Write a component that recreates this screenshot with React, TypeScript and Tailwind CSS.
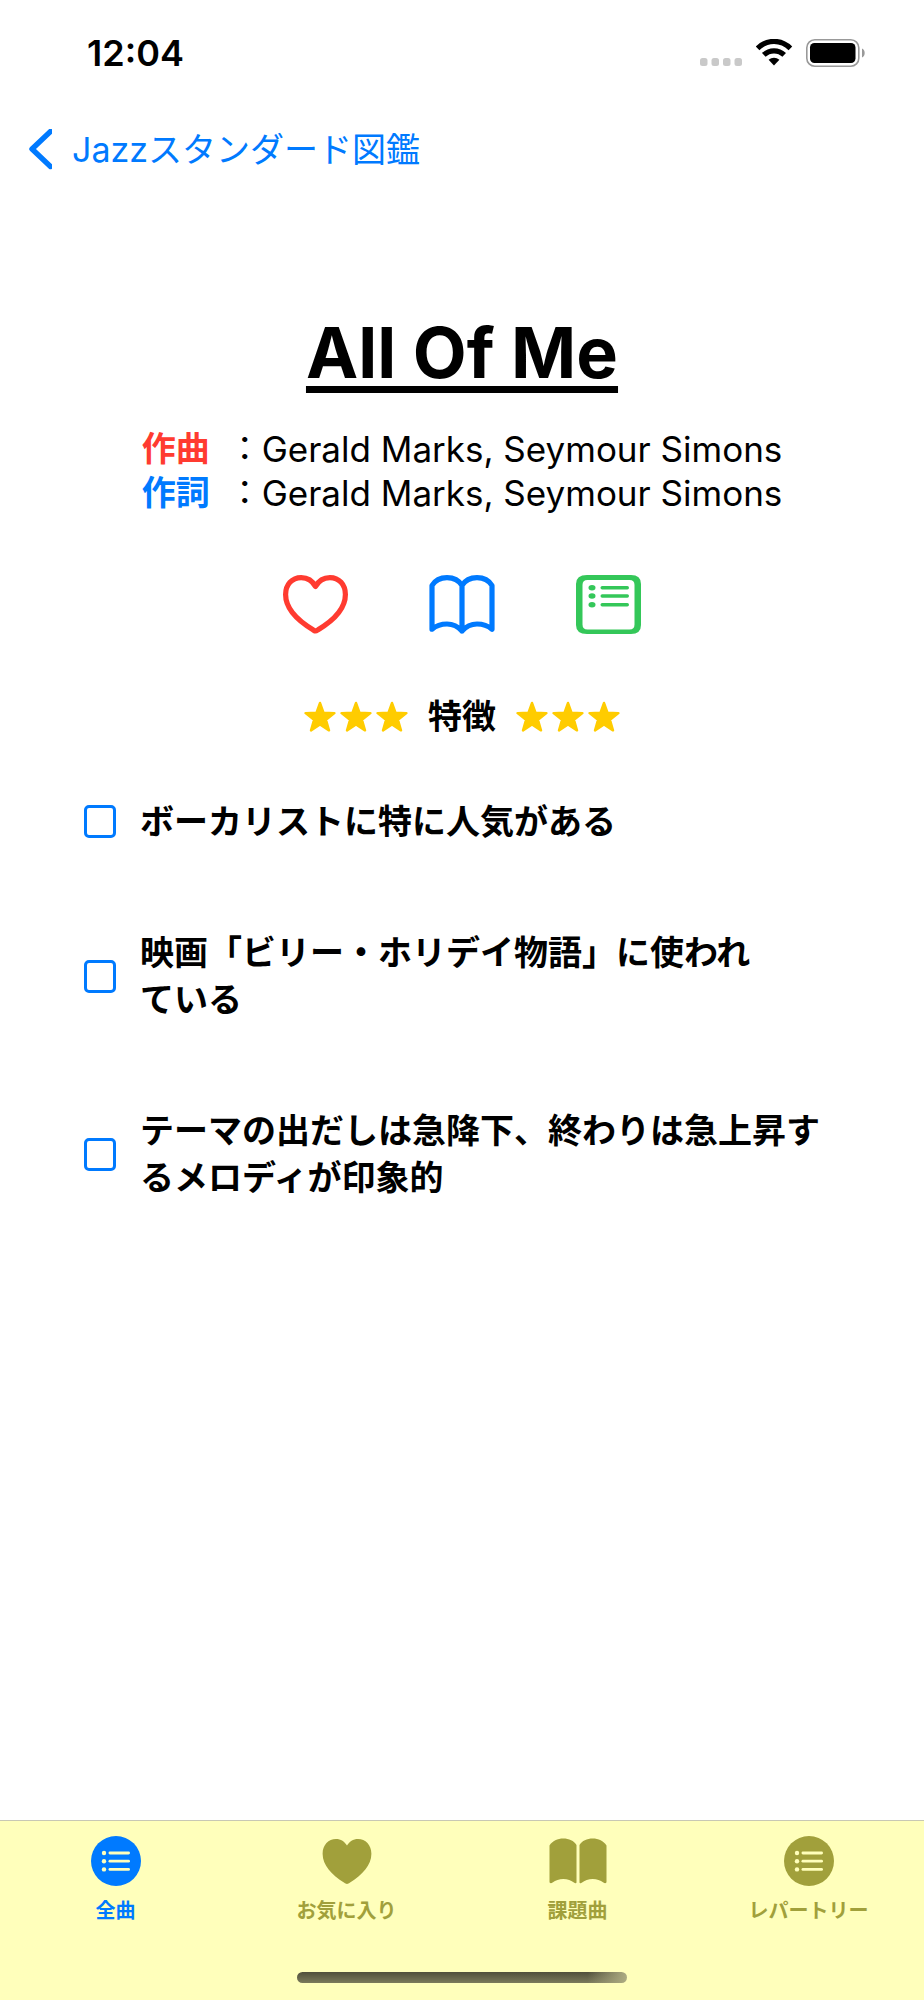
import React, { useState } from 'react';

const credits = [
    { label: '作曲', name: 'Gerald Marks, Seymour Simons', color: 'text-[#ff3b30]' },
    { label: '作詞', name: 'Gerald Marks, Seymour Simons', color: 'text-[#007aff]' },
];

const features = [
    'ボーカリストに特に人気がある',
    '映画「ビリー・ホリデイ物語」に使われ\nている',
    'テーマの出だしは急降下、終わりは急上昇す\nるメロディが印象的',
];

const tabs = [
    { label: '全曲', icon: ListCircleIcon },
    { label: 'お気に入り', icon: HeartFillIcon },
    { label: '課題曲', icon: BookFillIcon },
    { label: 'レパートリー', icon: ListCircleIcon },
];

function ListCircleIcon() {
    return (
        <svg width="50" height="50" viewBox="0 0 50 50">
            <circle cx="25" cy="25" r="25" fill="currentColor" />
            <g fill="#ffffbb">
                <circle cx="13" cy="17" r="2.2" />
                <circle cx="13" cy="25.2" r="2.2" />
                <circle cx="13" cy="33.4" r="2.2" />
                <rect x="17.5" y="15.6" width="21.5" height="2.8" rx="1.4" />
                <rect x="17.5" y="23.8" width="21.5" height="2.8" rx="1.4" />
                <rect x="17.5" y="32" width="21.5" height="2.8" rx="1.4" />
            </g>
        </svg>
    );
}

function HeartFillIcon() {
    return (
        <svg width="50" height="50" viewBox="0 0 50 50" fill="currentColor">
            <path d="M25 48C24 48 23.2 47.4 22.3 46.8C9.5 38.6 .6 29 .6 17.7C.6 9 6.5 3 14 3C18.8 3 22.8 5.6 25 9.6C27.2 5.6 31.2 3 36 3C43.5 3 49.4 9 49.4 17.7C49.4 29 40.5 38.6 27.7 46.8C26.8 47.4 26 48 25 48Z" />
        </svg>
    );
}

function BookFillIcon() {
    return (
        <svg width="58" height="50" viewBox="0 0 58 50" fill="currentColor">
            <path d="M.5 9.5C3.5 5 8.5 2.6 14.3 2.6C20 2.6 25 5 27.5 9V46.2C27.5 47.3 26.2 47.6 25.3 46.8C22.3 44.3 18.5 43 14.3 43C10 43 6.7 44.3 3.6 46.6C2.2 47.6 .5 47.5 .5 45.8Z" />
            <path d="M57.5 9.5C54.5 5 49.5 2.6 43.7 2.6C38 2.6 33 5 30.5 9V46.2C30.5 47.3 31.8 47.6 32.7 46.8C35.7 44.3 39.5 43 43.7 43C48 43 51.3 44.3 54.4 46.6C55.8 47.6 57.5 47.5 57.5 45.8Z" />
        </svg>
    );
}

function HeartIcon() {
    return (
        <svg width="66" height="60" viewBox="0 0 66 60" fill="none" stroke="#ff3b30" strokeWidth="5.2" strokeLinejoin="round">
            <path d="M32.5 11.5C29.5 5.8 24.5 2.6 18.2 2.6C9 2.6 2.6 9.6 2.6 19.6C2.6 33 14.5 45.5 30 54.8C31.6 55.8 31.8 56 32.5 56C33.2 56 33.5 55.8 35.1 54.8C50.6 45.5 62.4 33 62.4 19.6C62.4 9.6 56.1 2.6 46.9 2.6C40.6 2.6 35.6 5.8 32.5 11.5Z" />
        </svg>
    );
}

function BookIcon() {
    return (
        <svg width="66" height="60" viewBox="0 0 66 60" fill="none" stroke="#007aff" strokeWidth="5.2" strokeLinecap="round" strokeLinejoin="round">
            <path d="M33 56V10.5C30 5.5 24.5 2.6 18 2.6C11.5 2.6 6 5.5 3 10.5V54.2C7 50.8 12 49 18 49C24 49 29 51.5 33 56C37 51.5 42 49 48 49C54 49 59 50.8 63 54.2V10.5C60 5.5 54.5 2.6 48 2.6C41.5 2.6 36 5.5 33 10.5" />
        </svg>
    );
}

function ListIcon() {
    return (
        <svg width="66" height="60" viewBox="0 0 66 60" fill="#34c759">
            <path fillRule="evenodd" d="M12 0H56Q66 0 66 9V50Q66 59 56 59H12Q1 59 1 50V9Q1 0 12 0ZM12.5 5Q7.500 5 7.500 10V49.5Q7.500 54.5 12.500 54.5H54.5Q59.5 54.5 59.5 49.5V10Q59.5 5 54.5 5Z" />
            <ellipse cx="17" cy="12.7" rx="3.5" ry="2.7" />
            <ellipse cx="17" cy="21" rx="3.5" ry="2.7" />
            <ellipse cx="17" cy="29.7" rx="3.5" ry="2.7" />
            <rect x="25.5" y="11" width="28.5" height="3.5" rx="1.7" />
            <rect x="25.5" y="19.3" width="28.5" height="3.5" rx="1.7" />
            <rect x="25.5" y="28" width="28.5" height="3.5" rx="1.7" />
        </svg>
    );
}

function Stars() {
    return (
        <div className="flex gap-1">
            {[0, 1, 2].map((i) => (
                <svg key={i} width="32" height="32" viewBox="0 0 32 32" fill="#ffcc00" stroke="#ffcc00" strokeWidth="2.4" strokeLinejoin="round">
                    <path d="M16 2L19.6 11.8L30.4 12.1L22 18.9L25 29.4L16 23.6L7 29.4L10 18.9L1.6 12.1L12.4 11.8Z" />
                </svg>
            ))}
        </div>
    );
}

function StatusBar() {
    return (
        <div className="flex h-[106px] items-center justify-between pl-[87px] pr-[58px]">
            <span className="text-[36px] font-semibold leading-[44px]">12:04</span>
            <div className="flex items-center">
                <svg width="44" height="28" viewBox="0 0 44 28" fill="#c9c9c9">
                    <rect x="0" y="19" width="7.5" height="8" rx="2.5" />
                    <rect x="11.5" y="19" width="7.5" height="8" rx="2.5" />
                    <rect x="23" y="19" width="7.5" height="8" rx="2.5" />
                    <rect x="34.5" y="19" width="7.5" height="8" rx="2.5" />
                </svg>
                <svg className="ml-3" width="38" height="28" viewBox="0 0 38 28">
                    <g fill="none" stroke="#000" strokeWidth="5.2">
                        <path d="M1.6 9.3C11 .1 25 .1 34.4 9.3" />
                        <path d="M7.8 15.9C13.6 10.4 22.4 10.4 28.2 15.9" />
                    </g>
                    <path d="M12.6 20.7C15.8 18 20.2 18 23.4 20.7L18 26.5Z" />
                </svg>
                <svg className="ml-3" width="60" height="28" viewBox="0 0 60 28">
                    <rect x=".8" y=".8" width="52" height="26.4" rx="8" fill="none" stroke="#999" strokeWidth="1.6" />
                    <rect x="4" y="4" width="45.5" height="20" rx="4.5" />
                    <path d="M56 9.5C59.6 11 59.6 17 56 18.5Z" fill="#999" />
                </svg>
            </div>
        </div>
    );
}

export default function App() {
    const [checked, setChecked] = useState<boolean[]>(features.map(() => false));
    const [activeTab, setActiveTab] = useState(0);

    const toggle = (index: number) => {
        setChecked(checked.map((value, i) => (i === index ? !value : value)));
    };

    return (
        <div lang="ja" className="flex min-h-screen flex-col bg-white font-[Inter,'Noto_Sans_CJK_JP',sans-serif] text-black">
            <StatusBar />

            <nav className="flex h-[88px] items-center pl-[27px]">
                <a href="#" className="flex items-center gap-5 text-[34px] leading-[48px] text-[#007aff]">
                    <svg width="25" height="42" viewBox="0 0 25 42" fill="none" stroke="currentColor" strokeWidth="5.4" strokeLinecap="round" strokeLinejoin="round">
                        <path d="M23.5 2.5L5 20L23.5 37.5" />
                    </svg>
                    Jazzスタンダード図鑑
                </a>
            </nav>

            <main className="flex flex-1 flex-col items-center pt-[115px]">
                <h1 className="text-[70px] font-bold leading-[88px] underline decoration-[7px] underline-offset-[8px] [text-decoration-skip-ink:none]">All Of Me</h1>

                <div className="mt-[30px] text-[35px] leading-[44px]">
                    {credits.map((credit) => (
                        <div key={credit.label} className="flex">
                            <span className={`mr-[18px] text-[34px] font-bold ${credit.color}`}>{credit.label}</span>
                            <span className="text-[34px]">：</span>
                            <span>{credit.name}</span>
                        </div>
                    ))}
                </div>

                <div className="mt-[60px] flex gap-20">
                    <button type="button" aria-label="お気に入り"><HeartIcon /></button>
                    <button type="button" aria-label="課題曲"><BookIcon /></button>
                    <button type="button" aria-label="レパートリー"><ListIcon /></button>
                </div>

                <div className="mt-[58px] flex items-center gap-5">
                    <Stars />
                    <h2 className="text-[34px] font-bold leading-[48px]">特徴</h2>
                    <Stars />
                </div>

                {/* Features */}
                <ul className="mt-[57px] flex w-full flex-col gap-[84px] px-[84px]">
                    {features.map((feature, i) => (
                        <li key={feature}>
                            <label className="flex items-center gap-6">
                                <input
                                    type="checkbox"
                                    checked={checked[i]}
                                    onChange={() => toggle(i)}
                                    className="h-[33px] w-8 shrink-0 appearance-none rounded-[5px] border-3 border-[#007aff] checked:bg-[#007aff]"
                                />
                                <span className="whitespace-pre-line text-[34px] font-bold leading-[47px]">{feature}</span>
                            </label>
                        </li>
                    ))}
                </ul>
            </main>

            <footer className="border-t border-[#c8c8b4] bg-[#ffffbb] pb-[17px] pt-[15px]">
                <div className="grid grid-cols-4">
                    {tabs.map((tab, i) => (
                        <button
                            key={tab.label}
                            type="button"
                            onClick={() => setActiveTab(i)}
                            className={`flex flex-col items-center gap-[11px] ${activeTab === i ? 'text-[#007aff]' : 'text-[#a1a03b]'}`}
                        >
                            <tab.icon />
                            <span className="text-[20px] font-bold leading-[28px]">{tab.label}</span>
                        </button>
                    ))}
                </div>
                <div className="mx-auto mt-[47px] h-[11px] w-[330px] rounded-full bg-[linear-gradient(to_right,transparent_88%,#adac82),linear-gradient(to_bottom,#504f3b,#7b7a5b)]" />
            </footer>
        </div>
    );
}
